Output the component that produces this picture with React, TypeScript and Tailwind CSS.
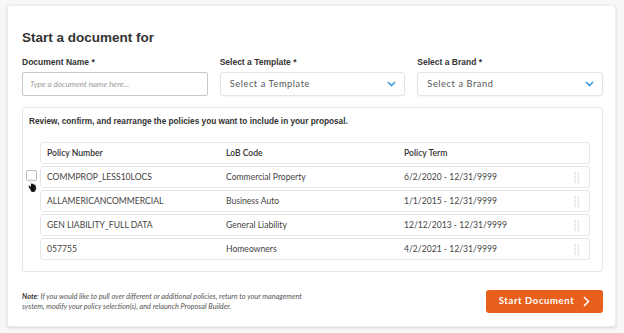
import { FC } from 'react';

const policies = [
    { number: 'COMMPROP_LESS10LOCS', lob: 'Commercial Property', term: '6/2/2020 - 12/31/9999' },
    { number: 'ALLAMERICANCOMMERCIAL', lob: 'Business Auto', term: '1/1/2015 - 12/31/9999' },
    { number: 'GEN LIABILITY_FULL DATA', lob: 'General Liability', term: '12/12/2013 - 12/31/9999' },
    { number: '057755', lob: 'Homeowners', term: '4/2/2021 - 12/31/9999' },
];

const Chevron: FC = () => (
    <svg width="9" height="6" viewBox="0 0 9 6" fill="none">
        <path d="M1 1l3.5 3.5L8 1" stroke="#3d9be0" strokeWidth="1.6" />
    </svg>
);

const Grip: FC = () => (
    <svg width="6" height="11" viewBox="0 0 6 11">
        {[0, 2, 4, 6, 8, 10].map((y) => (
            <g key={y} fill="#d4d4d4">
                <rect x="0.5" y={y} width="1.5" height="1" />
                <rect x="3.5" y={y} width="1.5" height="1" />
            </g>
        ))}
    </svg>
);

const HandCursor: FC = () => (
    <svg width="12" height="15" viewBox="0 0 12 15">
        <path
            d="M3.5 1.2c.6 0 1 .4 1 1v4.3l.4-.1c.5-.2 1.1.1 1.3.5.5-.2 1.1 0 1.3.5.5-.2 1.2.1 1.3.7l.6 2.6c.2 1-.1 2-.7 2.8l-.7.9v1H4v-1L1.4 10c-.4-.6-.3-1.3.2-1.6.4-.3 1-.2 1.3.2l.6.8V2.2c0-.6.4-1 1-1z"
            fill="#111"
            stroke="#fff"
            strokeWidth="0.8"
        />
    </svg>
);

const SelectBox: FC<{ label: string }> = ({ label }) => (
    <div className="flex h-[24px] items-center justify-between rounded-[3px] border border-[#e3e3e3] bg-white pl-[9px] pr-[8px] shadow-[0_1px_1px_rgba(0,0,0,0.04)]">
        <span className="text-[9.2px] tracking-[0.6px] text-[#555] [font-family:Lato,'Open_Sans',sans-serif]">{label}</span>
        <Chevron />
    </div>
);

export default function App() {
    return (
        <div className="h-[333px] w-[624px] bg-[#f7f7f7] pl-[7px] pt-[5px] [font-family:'Liberation_Sans',Arial,sans-serif]">
            <div className="h-[322px] w-[609px] rounded-[3px] border border-[#ececec] bg-white pl-[14px] pr-[12px] pt-[23px] shadow-[0_1px_3px_rgba(0,0,0,0.14)]">
                <h1 className="text-[13.5px] font-bold leading-[17px] text-[#333]">Start a document for</h1>

                <div className="mt-[11px] grid grid-cols-3 gap-x-[12px]">
                    <div>
                        <div className="text-[8.5px] font-bold leading-[11px] text-[#333]">Document Name *</div>
                        <div className="mt-[4px] flex h-[24px] items-center rounded-[2px] border border-[#c8c8c8] bg-white px-[7px]">
                            <span className="text-[8px] italic text-[#9a9a9a] [font-family:Lato,sans-serif]">Type a document name here...</span>
                        </div>
                    </div>
                    <div>
                        <div className="text-[8.5px] font-bold leading-[11px] text-[#333]">Select a Template *</div>
                        <div className="mt-[4px]">
                            <SelectBox label="Select a Template" />
                        </div>
                    </div>
                    <div>
                        <div className="text-[8.5px] font-bold leading-[11px] text-[#333]">Select a Brand *</div>
                        <div className="mt-[4px]">
                            <SelectBox label="Select a Brand" />
                        </div>
                    </div>
                </div>

                <div className="relative mt-[11px] h-[165px] rounded-[3px] border border-[#e6e6e6] pl-[6px] pr-[12px] pt-[8px]">
                    <p className="text-[8.25px] font-bold leading-[12px] text-[#333]">
                        Review, confirm, and rearrange the policies you want to include in your proposal.
                    </p>

                    <div className="ml-[11px] mt-[14px] flex flex-col gap-[2px] text-[8.6px] text-[#444] [font-family:Lato,sans-serif]">
                        <div className="grid h-[22px] grid-cols-[179px_178px_1fr] items-center rounded-[3px] border border-[#e6e6e6] pl-[6px] font-semibold text-[#333]">
                            <span>Policy Number</span>
                            <span>LoB Code</span>
                            <span>Policy Term</span>
                        </div>
                        {policies.map((p) => (
                            <div
                                key={p.number}
                                className="grid h-[22px] grid-cols-[179px_178px_1fr_auto] items-center rounded-[3px] border border-[#e6e6e6] pl-[6px] pr-[9px]"
                            >
                                <span>{p.number}</span>
                                <span>{p.lob}</span>
                                <span>{p.term}</span>
                                <span className="flex items-center">
                                    <Grip />
                                </span>
                            </div>
                        ))}
                    </div>

                    <div className="absolute left-[3px] top-[62px] h-[11px] w-[11px] rounded-[2px] border border-[#bdbdbd] bg-white" />
                    <div className="absolute left-[4px] top-[69px]">
                        <HandCursor />
                    </div>
                </div>

                <div className="mt-[18px] flex items-center justify-between">
                    <p className="w-[300px] text-[7.3px] italic leading-[10px] text-[#555] [font-family:Lato,sans-serif]">
                        <span className="font-bold text-[#333]">Note</span>: If you would like to pull over different or additional policies, return to your management system, modify your policy selection(s), and relaunch Proposal Builder.
                    </p>
                    <button className="flex h-[23px] w-[117px] items-center justify-center gap-[9px] rounded-[3px] bg-[#e8601c] text-[9.5px] font-bold tracking-[0.6px] text-white [font-family:Lato,sans-serif]">
                        Start Document
                        <svg width="7" height="11" viewBox="0 0 7 11" fill="none">
                            <path d="M1 1l4.5 4.5L1 10" stroke="#fff" strokeWidth="1.6" />
                        </svg>
                    </button>
                </div>
            </div>
        </div>
    );
}
